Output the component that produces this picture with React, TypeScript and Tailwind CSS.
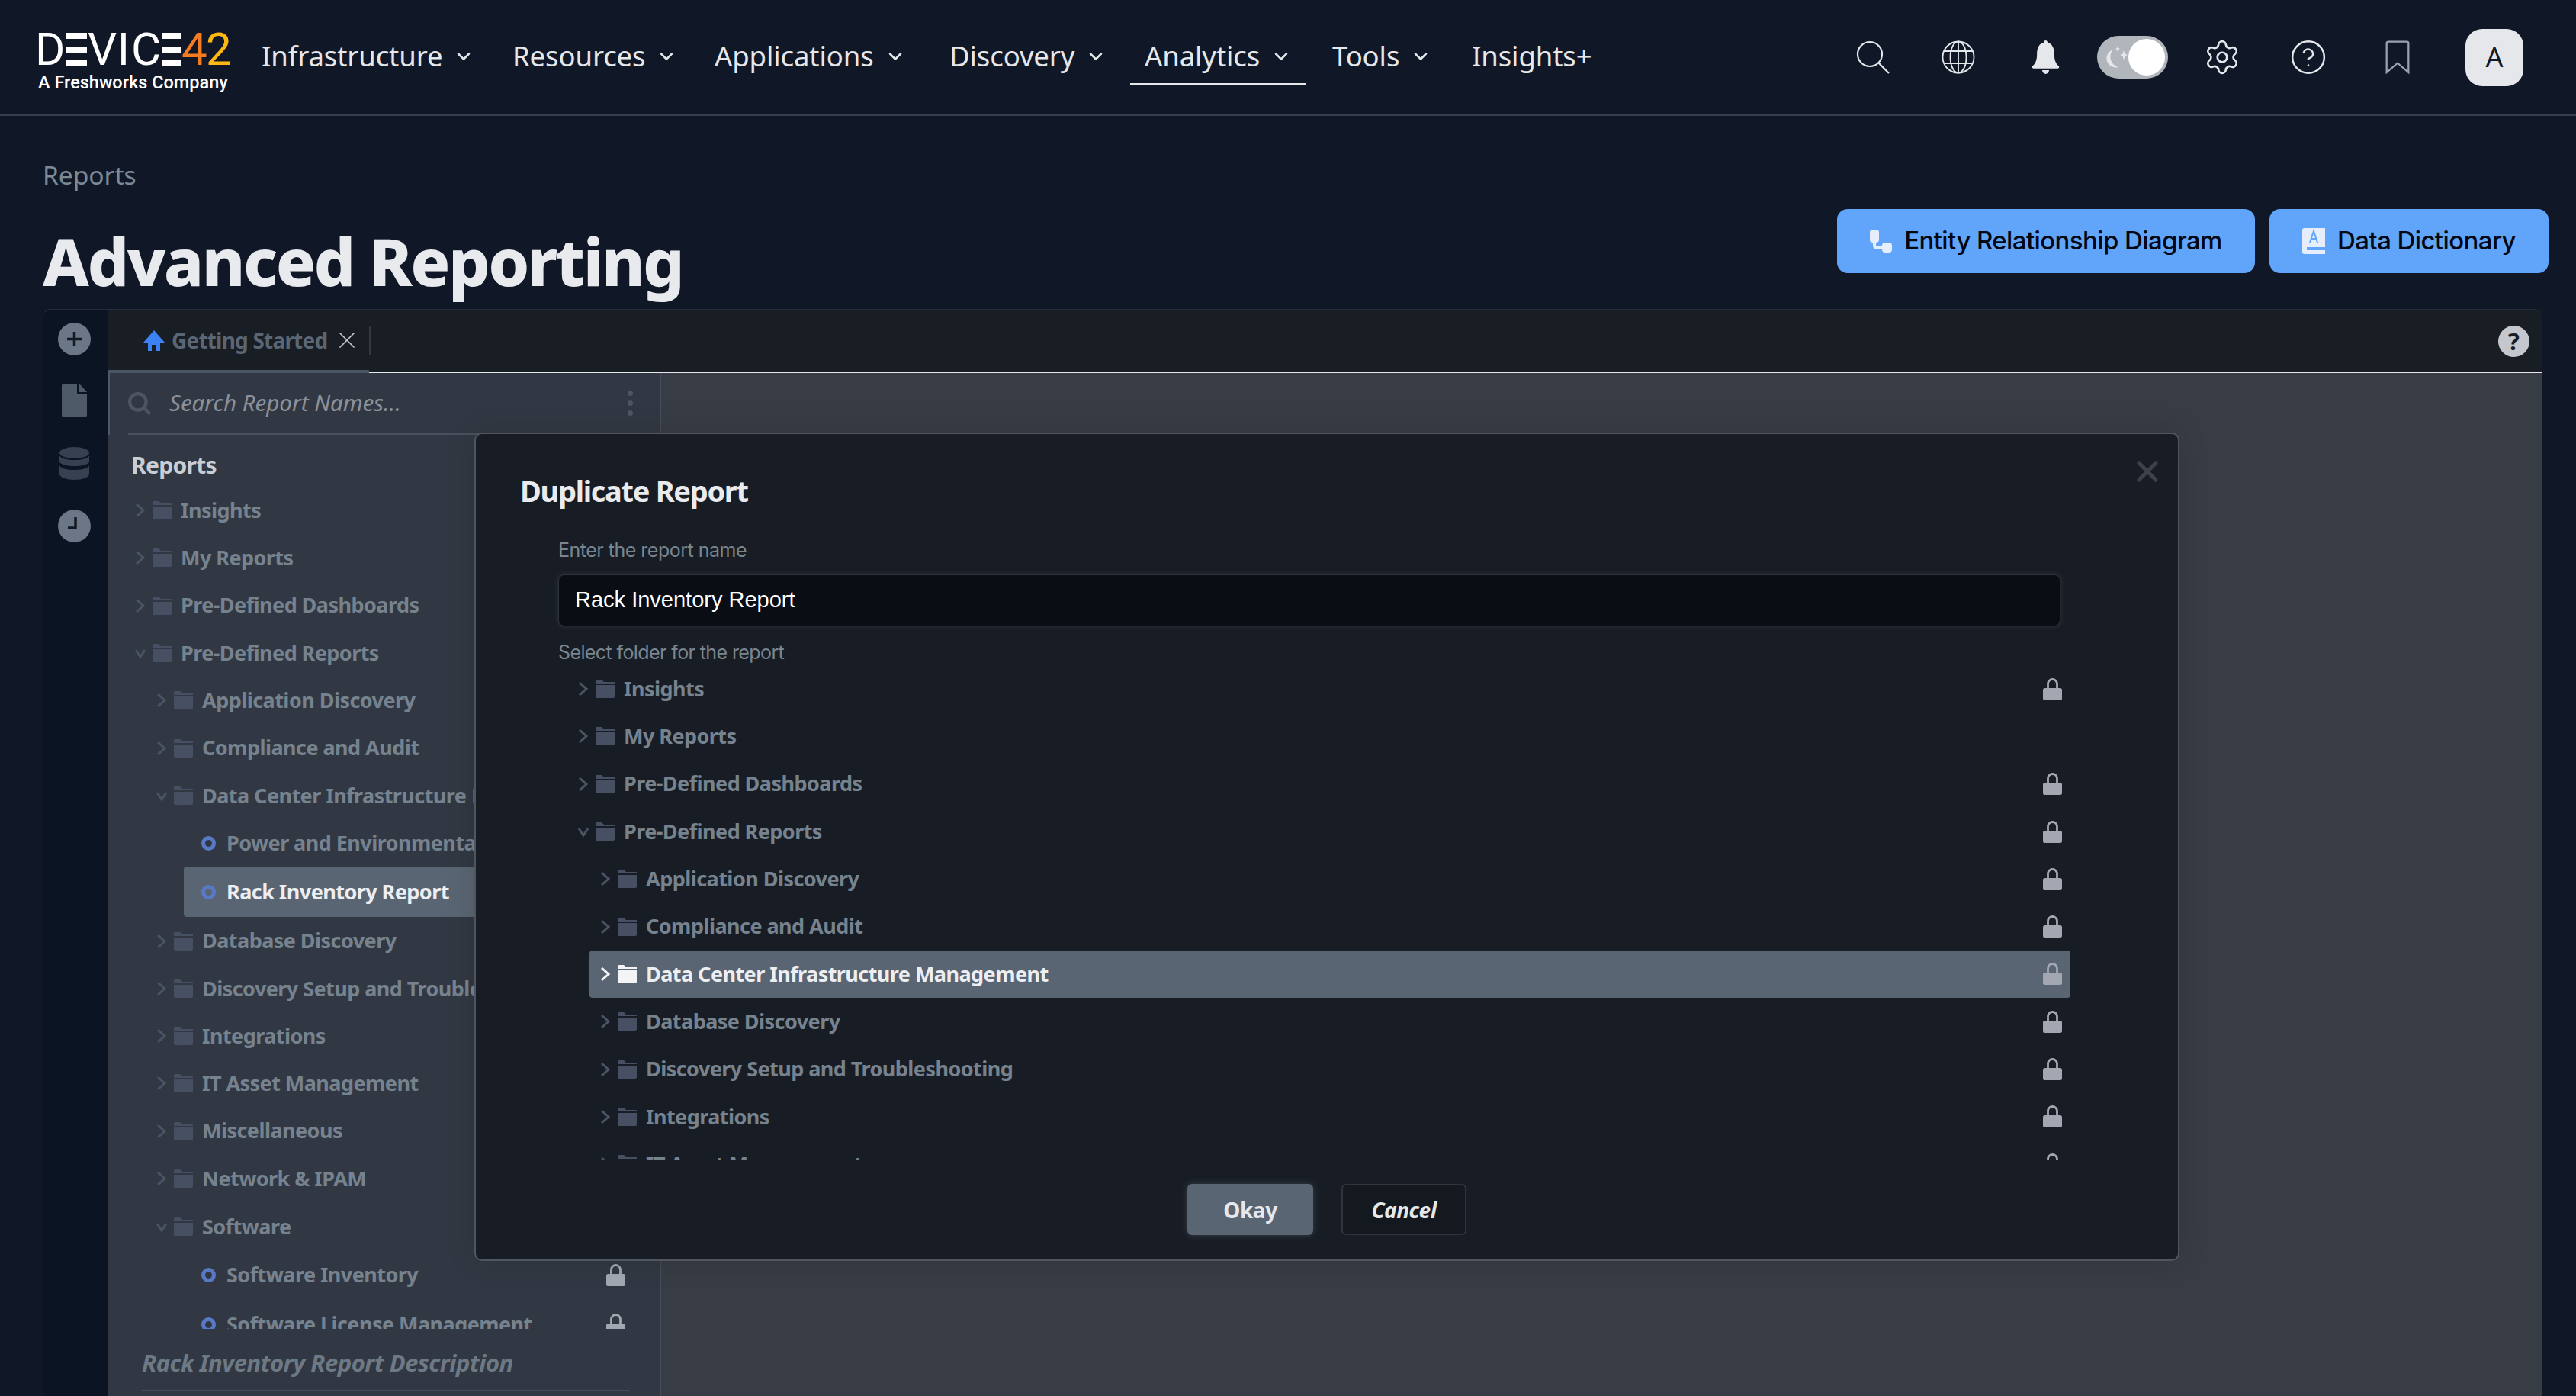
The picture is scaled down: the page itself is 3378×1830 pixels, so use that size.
import { ChevronDown, CircleHelp, Settings, X } from 'lucide-react';

type Row = {
  label: string;
  indent: string;
  kind?: 'closed' | 'open' | 'leaf';
  lock?: boolean;
  active?: boolean;
  height?: string;
};

const navItems = [
  { label: 'Infrastructure', width: 'w-[329px]', menu: true },
  { label: 'Resources', width: 'w-[265px]', menu: true },
  { label: 'Applications', width: 'w-[308px]', menu: true },
  { label: 'Discovery', width: 'w-[256px]', menu: true },
  { label: 'Analytics', width: 'w-[246px]', menu: true, current: true },
  { label: 'Tools', width: 'w-[183px]', menu: true },
  { label: 'Insights+', width: 'w-[200px]', menu: false },
];

const sideRows: Row[] = [
  { label: 'Insights', indent: 'pl-[4px]' },
  { label: 'My Reports', indent: 'pl-[4px]' },
  { label: 'Pre-Defined Dashboards', indent: 'pl-[4px]' },
  { label: 'Pre-Defined Reports', indent: 'pl-[4px]', kind: 'open' },
  { label: 'Application Discovery', indent: 'pl-[32px]' },
  { label: 'Compliance and Audit', indent: 'pl-[32px]' },
  { label: 'Data Center Infrastructure Management', indent: 'pl-[32px]', kind: 'open' },
  { label: 'Power and Environmental', indent: 'pl-[91px]', kind: 'leaf' },
  { label: 'Rack Inventory Report', indent: 'ml-[68px] pl-[23px]', kind: 'leaf', active: true, height: 'h-[66px]' },
  { label: 'Database Discovery', indent: 'pl-[32px]' },
  { label: 'Discovery Setup and Troubleshooting', indent: 'pl-[32px]' },
  { label: 'Integrations', indent: 'pl-[32px]' },
  { label: 'IT Asset Management', indent: 'pl-[32px]' },
  { label: 'Miscellaneous', indent: 'pl-[32px]' },
  { label: 'Network & IPAM', indent: 'pl-[32px]' },
  { label: 'Software', indent: 'pl-[32px]', kind: 'open', height: 'h-[64px]' },
  { label: 'Software Inventory', indent: 'mb-[3px] pl-[91px]', kind: 'leaf', lock: true },
  { label: 'Software License Management', indent: 'pl-[91px]', kind: 'leaf', lock: true },
];

const folderRows: Row[] = [
  { label: 'Insights', indent: 'pl-[2px]', lock: true },
  { label: 'My Reports', indent: 'pl-[2px]' },
  { label: 'Pre-Defined Dashboards', indent: 'pl-[2px]', lock: true },
  { label: 'Pre-Defined Reports', indent: 'pl-[2px]', kind: 'open', lock: true },
  { label: 'Application Discovery', indent: 'pl-[31px]', lock: true },
  { label: 'Compliance and Audit', indent: 'pl-[31px]', lock: true },
  { label: 'Data Center Infrastructure Management', indent: 'ml-[17px] pl-[14px]', lock: true, active: true },
  { label: 'Database Discovery', indent: 'pl-[31px]', lock: true },
  { label: 'Discovery Setup and Troubleshooting', indent: 'pl-[31px]', lock: true },
  { label: 'Integrations', indent: 'pl-[31px]', lock: true },
  { label: 'IT Asset Management', indent: 'pl-[31px]', lock: true },
];

function Folder({ className }: { className: string }) {
  return (
    <svg viewBox="0 0 25 24" className={className} fill="currentColor">
      <path d="M0 2a2 2 0 0 1 2-2h6l3 3h14v2H0z" />
      <path d="M0 7h25v15a2 2 0 0 1-2 2H2a2 2 0 0 1-2-2z" />
    </svg>
  );
}

function Lock({ className }: { className: string }) {
  return (
    <svg viewBox="0 0 25 29" className={className} fill="currentColor">
      <path d="M6.500 15V7.500a6 6 0 0 1 12 0V15" fill="none" stroke="currentColor" strokeWidth="2.800" />
      <rect x="0" y="13" width="25" height="16" rx="2.500" />
    </svg>
  );
}

function Chevron({ open, className }: { open: boolean; className: string }) {
  return (
    <svg viewBox="0 0 14 20" className={className} fill="none" stroke="currentColor" strokeWidth="3">
      {open ? <path d="M1 6l6 9 6-9" /> : <path d="M2 2l9 8-9 8" />}
    </svg>
  );
}

function TreeRow({ row }: { row: Row }) {
  const kind = row.kind ?? 'closed';
  return (
    <div className={`flex ${row.height ?? 'h-[62.3px]'} items-center rounded-[4px] pr-[11px] ${row.indent} ${row.active ? 'bg-[#5a6573]' : ''}`}>
      {kind === 'leaf' ? (
        <span className="mr-[14px] h-[19px] w-[19px] shrink-0 rounded-full border-[5px] border-[#5a79c4]" />
      ) : (
        <>
          <span className="w-[23px] shrink-0">
            <Chevron open={kind === 'open'} className={`h-[20px] w-[14px] ${row.active ? 'text-[#f3f4f6]' : 'text-[#4a5463]'}`} />
          </span>
          <Folder className={`mr-[12px] h-[24px] w-[25px] shrink-0 ${row.active ? 'text-[#f3f4f6]' : 'text-[#475063]'}`} />
        </>
      )}
      <span className={`whitespace-nowrap text-[27px] font-bold tracking-[-0.55px] ${row.active ? 'text-[#eceef1]' : 'text-[#76838f]'}`}>
        {row.label}
      </span>
      {row.lock && <Lock className="ml-auto h-[29px] w-[25px] shrink-0 text-[#a3a7b1]" />}
    </div>
  );
}

function Logo() {
  const bar = 'h-[8px] bg-white';
  const Bars = ({ w }: { w: string }) => (
    <span className={`flex h-[43px] shrink-0 flex-col justify-between ${w}`}>
      <span className={bar} />
      <span className={bar} />
      <span className={bar} />
    </span>
  );
  return (
    <div className="mt-[14px] flex w-[248px] shrink-0 flex-col" aria-label="Device42">
      <div className="flex h-[43px] items-center text-[60px] leading-none text-white font-['Roboto',sans-serif]">
        <span className="-ml-[4px] w-[40px] shrink-0">D</span>
        <Bars w="w-[28px]" />
        <span className="ml-[1px] w-[37px] shrink-0 text-center">V</span>
        <span className="w-[20px] shrink-0 text-center">I</span>
        <span className="w-[41px] shrink-0">C</span>
        <Bars w="w-[25px]" />
        <span className="w-[32px] shrink-0 text-[#f47b20]">4</span>
        <span className="w-[28px] shrink-0 text-[#fdb813]">2</span>
      </div>
      <div className="mt-[9px] text-[23.500px] leading-[26px] font-medium whitespace-nowrap text-white font-['Roboto',sans-serif]">
        A Freshworks Company
      </div>
    </div>
  );
}

function Globe() {
  return (
    <svg viewBox="0 0 44 44" className="h-[44px] w-[44px]" fill="none" stroke="#e5e7eb" strokeWidth="1.800">
      <circle cx="22" cy="22" r="20.500" />
      <ellipse cx="22" cy="22" rx="10.500" ry="20.500" />
      <path d="M22 1.500v41M3 14h38M3 30h38" />
    </svg>
  );
}

function Search() {
  return (
    <svg viewBox="0 0 44 44" className="h-[44px] w-[44px]" fill="none" stroke="#e5e7eb" strokeWidth="2.200">
      <circle cx="18" cy="18" r="16" />
      <path d="M29.500 29.500 43 43" />
    </svg>
  );
}

function Bell() {
  return (
    <svg viewBox="0 0 24 27" className="h-[44px] w-[39px]" fill="#e5e7eb">
      <path d="M12 0c.9 0 1.500.7 1.600 1.700C17.500 2.800 19 6.400 19 11c0 4.600 1 7.400 3.600 9.600.6.600.3 1.900-.7 1.900H2.100c-1 0-1.300-1.300-.7-1.900C4 18.400 5 15.600 5 11c0-4.600 1.500-8.200 5.400-9.300C10.500.7 11.100 0 12 0z" />
      <path d="M9.200 24h5.600c-.2 1.700-1.300 3-2.800 3s-2.600-1.300-2.800-3z" />
    </svg>
  );
}

function ThemeToggle() {
  return (
    <div className="ml-[46px] flex h-[56px] w-[93px] items-center justify-between rounded-full bg-[#b1b6bd] pr-[4px] pl-[9px]">
      <svg viewBox="0 0 31 36" className="h-[36px] w-[31px]" fill="#e5e7eb">
        <path d="M12 8A12 12 0 1 0 19 31 14 14 0 0 1 12 8z" />
        <path d="M18 3l1 3 2 1-2 1-1 3-1-3-2-1 2-1zM26 9l1.500 4.500L31 15l-3.500 1.500L26 22l-1.500-5.500L21 15l3.500-1.500z" />
      </svg>
      <span className="h-[48px] w-[48px] rounded-full bg-white" />
    </div>
  );
}

function RailIcons() {
  return (
    <div className="flex w-[86px] shrink-0 flex-col items-center bg-[#0a1422] pt-[16px] pr-[3px]">
      <svg viewBox="0 0 43 43" className="h-[43px] w-[43px]">
        <circle cx="21.500" cy="21.500" r="21.500" fill="#6b7687" />
        <path d="M21.500 12v19M12 21.500h19" stroke="#141a24" strokeWidth="3.500" />
      </svg>
      <svg viewBox="0 0 33 44" className="mt-[37px] h-[44px] w-[33px]" fill="#4f5a68">
        <path d="M3 0h17v12a2 2 0 0 0 2 2h11v27a3 3 0 0 1-3 3H3a3 3 0 0 1-3-3V3a3 3 0 0 1 3-3z" />
        <path d="M23 0l10 11H23z" />
      </svg>
      <svg viewBox="0 0 39 43" className="mt-[39px] h-[43px] w-[39px]" fill="#364050">
        <ellipse cx="19.500" cy="7.500" rx="19.500" ry="7.500" />
        <path d="M0 11.500c3 4 10 5.500 19.500 5.500S36 15.500 39 11.500v8c-3 4-10 5.500-19.500 5.500S3 23.500 0 19.500z" />
        <path d="M0 24.500c3 4 10 5.500 19.500 5.500S36 28.500 39 24.500v11c0 4-9 7.500-19.500 7.500S0 39.500 0 35.500z" />
      </svg>
      <svg viewBox="0 0 43 43" className="mt-[39px] h-[43px] w-[43px]">
        <circle cx="21.500" cy="21.500" r="21.500" fill="#6b7687" />
        <path d="M23 10v14H13" fill="none" stroke="#141a24" strokeWidth="3.500" />
      </svg>
    </div>
  );
}

function SidePanel() {
  return (
    <aside className="flex w-[725px] shrink-0 flex-col border-r-2 border-[#474d58] bg-[#323843]">
      <div className="flex h-[81px] shrink-0 border-l-2 border-[#4f5866]">
        <div className="ml-[24px] flex flex-1 items-center border-b-2 border-[#4a525e] pr-[35px]">
          <svg viewBox="0 0 28 28" className="h-[30px] w-[30px]" fill="none" stroke="#4f5560" strokeWidth="4">
            <circle cx="12" cy="12" r="10" />
            <path d="M19 19l8 8" />
          </svg>
          <span className="ml-[24px] text-[29.500px] italic text-[#8b919a]">Search Report Names...</span>
          <span className="ml-auto flex flex-col gap-[6px]">
            <span className="h-[7px] w-[7px] rounded-full bg-[#4f5560]" />
            <span className="h-[7px] w-[7px] rounded-full bg-[#4f5560]" />
            <span className="h-[7px] w-[7px] rounded-full bg-[#4f5560]" />
          </span>
        </div>
      </div>
      <div className="flex h-[68px] shrink-0 items-end pb-[6px] pl-[30px] text-[30px] font-bold tracking-[-0.7px] text-[#c9ced4]">
        Reports
      </div>
      <div className="ml-[31px] h-[1104px] shrink-0 overflow-hidden pr-[34px]">
        {sideRows.map((row) => (
          <TreeRow key={row.label} row={row} />
        ))}
      </div>
      <div className="ml-[44px] mr-[40px] flex h-[82px] shrink-0 items-center border-b-2 border-[#474d58] pt-[8px] text-[31px] font-bold italic tracking-[-0.500px] text-[#6d7a85]">
        Rack Inventory Report Description
      </div>
    </aside>
  );
}

function DuplicateDialog() {
  return (
    <div className="absolute top-[160px] left-[566px] h-[1086px] w-[2236px] rounded-[10px] border-2 border-[#50555f] bg-[#181d25] shadow-[0_0_40px_rgba(0,0,0,0.12)]">
      <X className="absolute top-[27px] right-[18px] h-[44px] w-[44px] text-[#3c414c]" strokeWidth={2.8} />
      <h2 className="mt-[50px] ml-[58px] text-[38px] leading-[48px] font-bold tracking-[-1.300px] text-[#e9ebee]">Duplicate Report</h2>
      <div className="mt-[38px] ml-[108px] text-[25px] leading-[32px] text-[#79858f] font-['Inter',sans-serif] tracking-[-0.500px]">
        Enter the report name
      </div>
      <div className="mt-[16px] ml-[108px] flex h-[68px] w-[1970px] items-center rounded-[8px] border border-[#2d3138] bg-[#0a0d14] pl-[21px] text-[29px] text-white font-['Liberation_Sans',sans-serif] shadow-[0_0_6px_rgba(120,125,135,0.25)]">
        Rack Inventory Report
      </div>
      <div className="mt-[18px] ml-[108px] text-[25px] leading-[32px] text-[#79858f] font-['Inter',sans-serif] tracking-[-0.600px]">
        Select folder for the report
      </div>
      <div className="mt-[1px] ml-[132px] h-[648px] w-[1959px] overflow-hidden">
        {folderRows.map((row) => (
          <TreeRow key={row.label} row={row} />
        ))}
      </div>
      <div className="mt-[32px] ml-[933px] flex gap-[37px]">
        <button className="h-[67px] w-[165px] rounded-[6px] bg-[#5a6573] text-[28px] font-bold tracking-[-0.5px] text-[#e5e7eb] shadow-[0_0_10px_rgba(160,170,185,0.25)]">
          Okay
        </button>
        <button className="h-[67px] w-[164px] rounded-[6px] border-2 border-[#30343b] bg-[#14181f] text-[28px] font-bold italic tracking-[-0.5px] text-[#e5e7eb]">
          Cancel
        </button>
      </div>
    </div>
  );
}

export default function App() {
  return (
    <div className="flex h-[1830px] w-[3378px] flex-col overflow-hidden bg-[#101828] font-['Noto_Sans',sans-serif]">
      {/* top bar */}
      <header className="flex h-[152px] shrink-0 items-center border-b-2 border-[#373e4c] pl-[50px] pr-[69px]">
        <Logo />
        <nav className="ml-[26px] flex">
          {navItems.map((item) => (
            <div key={item.label} className={`flex ${item.width}`}>
              <div className={`flex h-[74px] items-center gap-[14px] border-b-[3px] px-[19px] text-[36.500px] tracking-[-0.100px] text-[#e5e7eb] ${item.current ? 'border-[#e5e7eb]' : 'border-transparent'}`}>
                {item.label}
                {item.menu && <ChevronDown className="h-[28px] w-[28px]" strokeWidth={2.2} />}
              </div>
            </div>
          ))}
        </nav>
        <div className="ml-auto flex items-center">
          <div className="-translate-x-[3px]"><Search /></div>
          <div className="ml-[66px] -translate-x-[1px]"><Globe /></div>
          <div className="ml-[74px] -translate-x-[2px]"><Bell /></div>
          <ThemeToggle />
          <Settings className="ml-[46px] h-[50px] w-[50px] text-[#e5e7eb]" strokeWidth={1.3} />
          <CircleHelp className="ml-[63px] h-[50px] w-[50px] text-[#e5e7eb]" strokeWidth={1.200} />
          <svg viewBox="0 0 31 43" className="ml-[76px] h-[44px] w-[32px]" fill="none" stroke="#9ca3af" strokeWidth="2.200">
            <path d="M1.500 3.500a2 2 0 0 1 2-2h24a2 2 0 0 1 2 2V41L15.500 29 1.500 41z" />
          </svg>
          <div className="ml-[73px] flex h-[75px] w-[76px] items-center justify-center rounded-[22px] bg-[#e5e7eb] text-[36px] text-[#111827]">
            A
          </div>
        </div>
      </header>

      {/* page title */}
      <div className="flex h-[253px] shrink-0 justify-between pl-[56px] pr-[36px]">
        <div>
          <div className="mt-[54px] text-[33.500px] leading-[46px] text-[#7d8a96]">Reports</div>
          <h1 className="mt-[40px] text-[86px] leading-[100px] font-extrabold tracking-[-2.500px] text-[#e8eaee]">Advanced Reporting</h1>
        </div>
        <div className="mt-[122px] flex gap-[19px]">
          <button className="flex h-[84px] w-[548px] items-center justify-center gap-[16px] rounded-[14px] bg-[#60a5fa] text-[33px] font-medium tracking-[-0.600px] text-[#030712] font-['Inter',sans-serif]">
            <svg viewBox="0 0 29 30" className="h-[30px] w-[29px]" fill="#e5eefa">
              <rect x="0" y="0" width="12" height="17" rx="4" />
              <path d="M4 15h4v5a2 2 0 0 0 2 2h8v4h-9a5 5 0 0 1-5-5z" />
              <rect x="16" y="17" width="13" height="13" rx="4" />
            </svg>
            Entity Relationship Diagram
          </button>
          <button className="flex h-[84px] w-[366px] items-center justify-center gap-[16px] rounded-[14px] bg-[#60a5fa] text-[33px] font-medium tracking-[-0.600px] text-[#030712] font-['Inter',sans-serif]">
            <svg viewBox="0 0 30 34" className="h-[34px] w-[30px]">
              <path d="M3 0h27v34H3a3 3 0 0 1-3-3V3a3 3 0 0 1 3-3z" fill="#e5eefa" />
              <path d="M10 19l5-15 5 15M12 14h6" fill="none" stroke="#60a5fa" strokeWidth="2" />
              <rect x="6" y="25" width="24" height="4" fill="#60a5fa" />
            </svg>
            Data Dictionary
          </button>
        </div>
      </div>

      {/* reporting panel */}
      <div className="relative ml-[56px] mr-[45px] flex flex-1 overflow-hidden rounded-t-[10px] border-t-2 border-[#262c38]">
        <RailIcons />
        <div className="flex flex-1 flex-col">
          <div className="flex h-[82px] shrink-0 items-center bg-[#191d24]">
            <div className="flex h-full w-[342px] shrink-0 items-center border-b-4 border-[#4b5563] pl-[46px]">
              <svg viewBox="0 0 28 27" className="h-[27px] w-[28px] shrink-0" fill="#3b82f6">
                <path d="M14 0l14 16h-6v11h-5v-8h-6v8H6V16H0z" />
              </svg>
              <span className="ml-[9px] whitespace-nowrap text-[28px] font-bold tracking-[-0.800px] text-[#5b6675]">Getting Started</span>
              <X className="ml-[8px] h-[36px] w-[36px] shrink-0 text-[#c9ced4]" strokeWidth={1.1} />
              <span className="ml-[11px] h-[37px] w-[2px] shrink-0 bg-[#333842]" />
            </div>
            <div className="flex h-full flex-1 items-center justify-end border-b-2 border-[#e5e7eb] pr-[16px]">
              <span className="flex h-[41px] w-[41px] items-center justify-center rounded-full bg-[#c4c8ce] text-[31px] font-bold text-[#191d24]">?</span>
            </div>
          </div>
          <div className="flex flex-1">
            <SidePanel />
            <div className="flex-1 bg-[#383c45]" />
          </div>
        </div>
        <DuplicateDialog />
      </div>
    </div>
  );
}
